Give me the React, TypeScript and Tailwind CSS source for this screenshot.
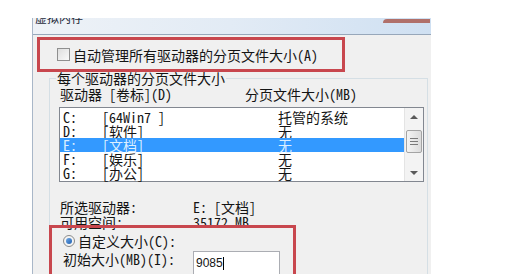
import React from 'react';

const FONT = "font-['Noto_Sans_Mono_CJK_SC','Noto_Sans_CJK_SC',monospace]";

const drives = [
  { letter: 'C:', label: '[64Win7 ]', size: '托管的系统' },
  { letter: 'D:', label: '[软件]', size: '无' },
  { letter: 'E:', label: '[文档]', size: '无', selected: true },
  { letter: 'F:', label: '[娱乐]', size: '无' },
  { letter: 'G:', label: '[办公]', size: '无' },
];

const Scrollbar: React.FC = () => (
  <div className="w-[19px] h-full flex flex-col bg-[#f3f3f3] border-l border-[#e4e4e4]">
    {/* up button */}
    <div className="h-[17px] flex items-center justify-center">
      <div className="w-0 h-0 border-l-[4px] border-r-[4px] border-b-[4px] border-l-transparent border-r-transparent border-b-[#5a5a5a]" />
    </div>
    {/* thumb */}
    <div className="mt-[5px] mx-[1px] h-[23px] rounded-[2px] border border-[#a4a4a4] bg-gradient-to-r from-[#f4f4f4] to-[#dcdcdc] flex flex-col items-center justify-center gap-[2px]">
      <div className="w-[8px] h-[1px] bg-[#7a7a7a]" />
      <div className="w-[8px] h-[1px] bg-[#7a7a7a]" />
      <div className="w-[8px] h-[1px] bg-[#7a7a7a]" />
    </div>
    <div className="flex-1" />
    {/* down button */}
    <div className="h-[17px] flex items-center justify-center">
      <div className="w-0 h-0 border-l-[4px] border-r-[4px] border-t-[4px] border-l-transparent border-r-transparent border-t-[#5a5a5a]" />
    </div>
  </div>
);

const App: React.FC = () => {
  return (
    <div className={`w-[516px] h-[274px] bg-white overflow-hidden pt-[18px] pl-[32px] text-[14px] text-[#141414] ${FONT}`}>
      <div className="w-[399px] h-[256px] flex flex-col border-l border-[#a9b7c8]">
        {/* Title bar */}
        <div className="h-[17px] shrink-0 flex items-start justify-between overflow-hidden border-b border-[#97a7ba] bg-gradient-to-r from-[#eef2f7] via-[#e2ebf5] to-[#cfe0f2]">
          <span className="pl-[2px] -mt-[6px] text-[12px] leading-[12px] text-[#1f2b3b]">虚拟内存</span>
          <div className="mt-[1px] mr-[1px] w-[47px] h-[4px] rounded-tl-[4px] bg-[#b0706a]" />
        </div>

        {/* Body */}
        <div className="flex-1 bg-[#f0f0f0] flex flex-col overflow-hidden">
          {/* Auto manage checkbox (highlighted) */}
          <div className="relative z-10 ml-[4px] mt-[2px] w-[308px] h-[35px] shrink-0 border-[3px] border-[#c8474e] flex items-center pl-[17px]">
            <div className="w-[13px] h-[13px] border border-[#8f8f8f] bg-gradient-to-br from-[#dedede] to-[#fafafa]" />
            <span className="ml-[3px] leading-[14px]">自动管理所有驱动器的分页文件大小(A)</span>
          </div>

          {/* Group box */}
          <div className="ml-[16px] mt-[6px] w-[379px] flex-1 border border-[#d5dfe5] flex flex-col">
            <div className="-mt-[8px] ml-[6px] self-start px-[1px] bg-[#f0f0f0] leading-[14px]">每个驱动器的分页文件大小</div>

            <div className="mt-[2px] pl-[10px] flex leading-[14px]">
              <span className="w-[185px]">驱动器 [卷标](D)</span>
              <span>分页文件大小(MB)</span>
            </div>

            {/* Drive list */}
            <div className="mt-[6px] ml-[9px] w-[365px] h-[75px] shrink-0 border border-[#828790] bg-white flex">
              <div className="flex-1 pt-[2px] flex flex-col">
                {drives.map((d) => (
                  <div
                    key={d.letter}
                    className={`h-[14px] leading-[14px] flex pl-[3px] ${d.selected ? 'bg-[#3399ff] text-[#dcefff]' : ''}`}
                  >
                    <span className="w-[39px]">{d.letter}</span>
                    <span className="w-[176px]">{d.label}</span>
                    <span>{d.size}</span>
                  </div>
                ))}
              </div>
              <Scrollbar />
            </div>

            {/* Selected drive info */}
            <div className="mt-[18px] pl-[10px] flex leading-[15px]">
              <span className="w-[133px]">所选驱动器:</span>
              <span>E: [文档]</span>
            </div>
            <div className="pl-[10px] flex leading-[15px]">
              <span className="w-[133px]">可用空间:</span>
              <span>35172 MB</span>
            </div>

            {/* Custom size (highlighted) */}
            <div className="relative z-10 -ml-[1px] -mt-[5px] w-[247px] h-[60px] shrink-0 border-[3px] border-[#c8474e] flex flex-col">
              <div className="mt-[6px] pl-[11px] flex items-center leading-[14px]">
                <div className="w-[12px] h-[12px] rounded-full border border-[#8a8a8a] bg-[#f4f4f4] flex items-center justify-center">
                  <div className="w-[6px] h-[6px] rounded-full bg-gradient-to-br from-[#6fa8e6] to-[#1d5fb0]" />
                </div>
                <span className="ml-[3px]">自定义大小(C):</span>
              </div>
              <div className="mt-[3px] pl-[11px] flex items-start">
                <span className="w-[130px] pt-[1px] leading-[14px]">初始大小(MB)(I):</span>
                <div className="w-[87px] h-[24px] border border-[#abadb3] bg-white flex items-center pl-[2px] font-['Liberation_Sans',sans-serif] text-[12px]">
                  <span>9085</span>
                  <span className="w-[1px] h-[13px] bg-black" />
                </div>
              </div>
            </div>
          </div>
        </div>
      </div>
    </div>
  );
};

export default App;
